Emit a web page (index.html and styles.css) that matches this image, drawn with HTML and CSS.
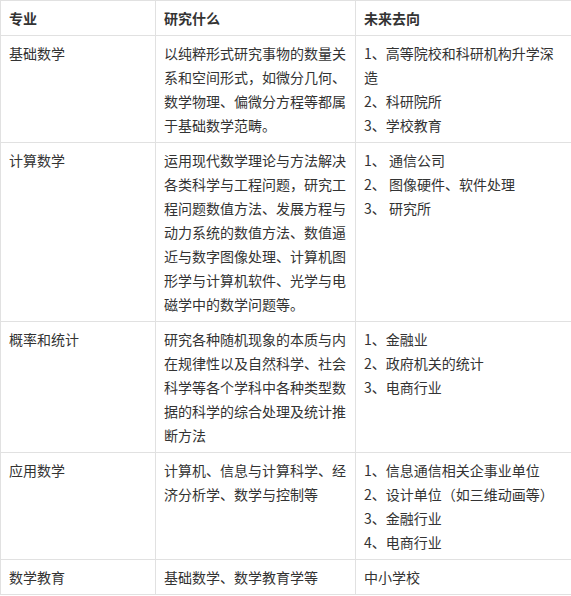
FILE: index.html
```html
<!DOCTYPE html>
<html lang="zh-CN">
<head>
<meta charset="utf-8">
<title>数学专业</title>
<link rel="stylesheet" href="styles.css">
</head>
<body>
<table class="majors">
  <colgroup>
    <col class="c1">
    <col class="c2">
    <col class="c3">
  </colgroup>
  <thead>
    <tr><th>专业</th><th>研究什么</th><th>未来去向</th></tr>
  </thead>
  <tbody>
    <tr>
      <td>基础数学</td>
      <td>以纯粹形式研究事物的数量关系和空间形式，如微分几何、数学物理、偏微分方程等都属于基础数学范畴。</td>
      <td>1、高等院校和科研机构升学深造<br>2、科研院所<br>3、学校教育</td>
    </tr>
    <tr>
      <td>计算数学</td>
      <td>运用现代数学理论与方法解决各类科学与工程问题，研究工程问题数值方法、发展方程与动力系统的数值方法、数值逼近与数字图像处理、计算机图形学与计算机软件、光学与电磁学中的数学问题等。</td>
      <td>1、&nbsp;通信公司<br>2、&nbsp;图像硬件、软件处理<br>3、&nbsp;研究所</td>
    </tr>
    <tr>
      <td>概率和统计</td>
      <td>研究各种随机现象的本质与内在规律性以及自然科学、社会科学等各个学科中各种类型数据的科学的综合处理及统计推断方法</td>
      <td>1、金融业<br>2、政府机关的统计<br>3、电商行业</td>
    </tr>
    <tr>
      <td>应用数学</td>
      <td>计算机、信息与计算科学、经济分析学、数学与控制等</td>
      <td>1、信息通信相关企事业单位<br>2、设计单位（如三维动画等）<br>3、金融行业<br>4、电商行业</td>
    </tr>
    <tr>
      <td>数学教育</td>
      <td>基础数学、数学教育学等</td>
      <td>中小学校</td>
    </tr>
  </tbody>
</table>
</body>
</html>
```

FILE: styles.css
```css
html, body {
  margin: 0;
  padding: 0;
  background: #fff;
  overflow: hidden;
}

.majors {
  border-collapse: collapse;
  table-layout: fixed;
  width: 571px;
  font-family: "Noto Sans CJK SC", "Noto Sans", sans-serif;
  font-size: 14px;
  line-height: 24px;
  color: #333;
}

.c1 { width: 155px; }
.c2 { width: 200px; }
.c3 { width: 216px; }

.majors th,
.majors td {
  border: 1px solid #e1e1e1;
  padding: 5px 8px;
  text-align: left;
  vertical-align: top;
  word-break: break-all;
}

.majors th:last-child,
.majors td:last-child {
  border-right: none;
}

.majors th {
  font-weight: bold;
  color: #333;
}
```
